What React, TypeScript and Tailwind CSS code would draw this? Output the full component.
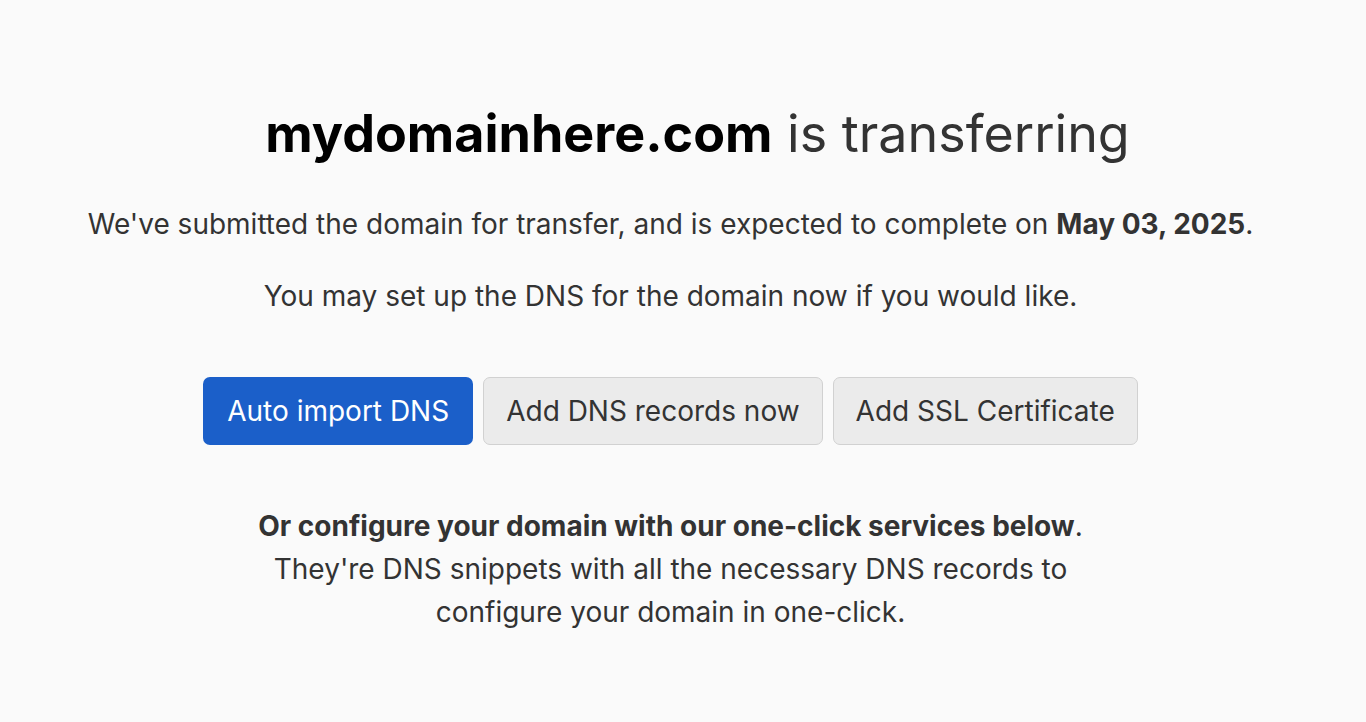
export default function App() {
  return (
    <div className="min-h-[722px] w-full bg-[#fafafa] text-[#333333] flex flex-col items-center pt-[104px] pr-[25px]" style={{ fontFamily: 'Inter, "Noto Sans", sans-serif' }}>
      <h1 className="ml-[54px] text-[52px] leading-[60px] text-[#333333]">
        <span className="font-bold text-black">mydomainhere.com</span> is transferring
      </h1>
      <p className="mt-[42px] text-[28px] leading-[36px]">
        We've submitted the domain for transfer, and is expected to complete on <span className="font-bold">May 03, 2025</span>.
      </p>
      <p className="mt-[36px] text-[28px] leading-[36px]">You may set up the DNS for the domain now if you would like.</p>
      <div className="mt-[63px] flex gap-[10px]">
        <button className="h-[68px] px-[24px] rounded-[7px] bg-[#1b5fc9] text-white text-[28px]">Auto import DNS</button>
        <button className="h-[68px] px-[22px] rounded-[7px] bg-[#ebebeb] border border-[#d1d1d1] text-[#333] text-[28px]">Add DNS records now</button>
        <button className="h-[68px] px-[22px] rounded-[7px] bg-[#ebebeb] border border-[#d1d1d1] text-[#333] text-[28px]">Add SSL Certificate</button>
      </div>
      <div className="mt-[60px] text-center text-[28px] leading-[43px]">
        <p><span className="font-bold">Or configure your domain with our one-click services below</span>.</p>
        <p>They're DNS snippets with all the necessary DNS records to<br />configure your domain in one-click.</p>
      </div>
    </div>
  );
}
